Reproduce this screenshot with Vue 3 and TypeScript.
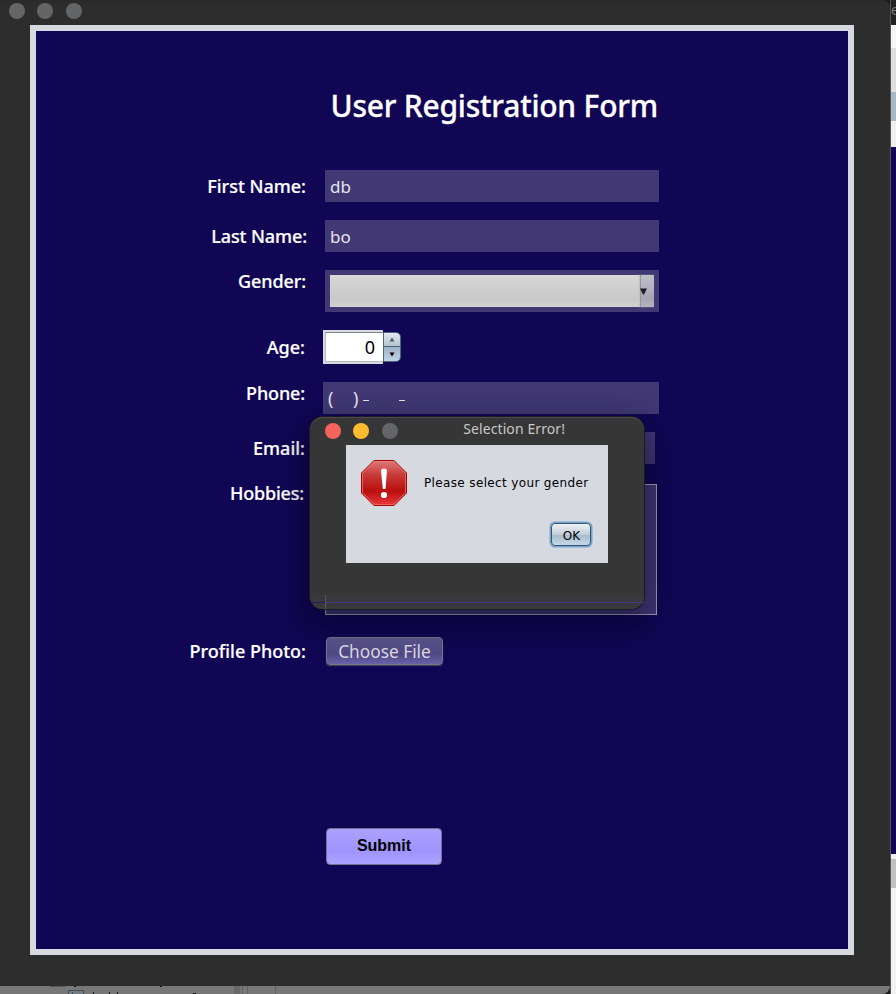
<script setup lang="ts">
import { ref } from 'vue'

const firstName = ref('db')
const lastName = ref('bo')
const age = ref(0)
</script>

<template>
  <div class="desktop">
    <main class="window">
      <header class="titlebar">
        <span class="dot"></span><span class="dot"></span><span class="dot"></span>
      </header>

      <section class="form">
        <h1>User Registration Form</h1>

        <div class="row first">
          <label>First Name:</label>
          <div class="field">{{ firstName }}</div>
        </div>
        <div class="row last">
          <label>Last Name:</label>
          <div class="field">{{ lastName }}</div>
        </div>
        <div class="row gender">
          <label>Gender:</label>
          <div class="combo">
            <div class="combo-face">
              <span class="combo-arrow">
                <svg width="7" height="7" viewBox="0 0 7 7"><path d="M0 .5H7L4 6.500H3Z" fill="#1d1d22" /></svg>
              </span>
            </div>
          </div>
        </div>
        <div class="row age">
          <label>Age:</label>
          <div class="spin-value"><span>{{ age }}</span></div>
          <div class="spin-buttons">
            <span><svg width="6" height="5" viewBox="0 0 6 5"><path d="M3 .5L5.5 4.5H.5Z" fill="#555c63" /></svg></span>
            <span><svg width="6" height="5" viewBox="0 0 6 5"><path d="M.5 .5H5.5L3 4.5Z" fill="#000" /></svg></span>
          </div>
        </div>
        <div class="row phone">
          <label>Phone:</label>
          <div class="field mask"><span>(</span><span>)</span><i></i><i></i></div>
        </div>
        <div class="row email">
          <label>Email:</label>
          <div class="field"></div>
        </div>
        <div class="row hobbies">
          <label>Hobbies:</label>
          <div class="area"></div>
        </div>
        <div class="row photo">
          <label>Profile Photo:</label>
          <button class="choose">Choose File</button>
        </div>
        <button class="submit">Submit</button>
      </section>
      <footer class="below">
        <svg width="300" height="8" viewBox="0 0 300 8">
          <path d="M50 .5H66" stroke="#595959" />
          <path d="M74 0h2v1h-2zM160 0h2v1h-2zM93 6h1v2h-1zM109 6h1v2h-1zM117 6h1v2h-1zM193 7h3v1h-3z" fill="#151515" />
          <path d="M68.5 8V4.500H83.500V8M72.500 6V8" fill="#747c84" stroke="#454d56" />
          <path d="M234 0h6v8h-6z" fill="#696969" />
          <path d="M242.500 0V8M247.500 0V8M275.500 0V8" stroke="#626262" />
        </svg>
      </footer>
    </main>

    <aside class="behind">
      <div class="b-title">e</div>
      <div class="b-white"></div>
      <div class="b-grey"></div>
      <div class="b-blue"></div>
      <div class="b-white2"></div>
      <div class="b-navy"></div>
      <div class="b-white3"></div>
      <div class="b-scroll"></div>
      <div class="b-rest"></div>
    </aside>

    <div class="dialog">
      <header class="dialog-bar">
        <span class="dot red"></span><span class="dot yellow"></span><span class="dot"></span>
        <h2>Selection Error!</h2>
      </header>
      <div class="dialog-body">
        <svg class="stop" width="48" height="48" viewBox="0 0 48 48">
          <defs>
            <linearGradient id="stopFill" x1="0" y1="0" x2="0" y2="1">
              <stop offset="0" stop-color="#dd7a7a" />
              <stop offset=".32" stop-color="#c93a3a" />
              <stop offset=".68" stop-color="#b90e0e" />
              <stop offset="1" stop-color="#ea3a3a" />
            </linearGradient>
          </defs>
          <path d="M14 1.500H34L46.500 14V34L34 46.500H14L1.500 34V14Z" fill="url(#stopFill)" stroke="#a90505" />
          <path d="M14.400 2.500H33.600L45.500 14.400V33.600L33.600 45.500H14.400L2.500 33.600V14.400Z" fill="none" stroke="#f08080" stroke-opacity=".65" />
          <path d="M21 11.500C21 8.800 27 8.800 27 11.500L25.500 30H22.800Z" fill="#fff" />
          <circle cx="24" cy="36" r="3.100" fill="#fff" />
        </svg>
        <p>Please select your gender</p>
        <button class="ok">OK</button>
      </div>
      <div class="ghost"><span></span></div>
    </div>
  </div>
</template>

<style>
body {
  background: #2d2d2d;
  overflow: hidden;
}
</style>

<style scoped>
.desktop {
  position: relative;
  display: flex;
  width: 896px;
  height: 994px;
  background: #1c1c1c;
  overflow: hidden;
  font-family: "Noto Sans", "Open Sans", sans-serif;
}
.desktop * {
  box-sizing: border-box;
}
button {
  padding: 0;
  margin: 0;
  white-space: nowrap;
}
.window {
  flex: none;
  width: 890px;
  height: 994px;
  background: #2d2d2d;
  border-radius: 0 8px 8px 0;
  overflow: hidden;
}
.titlebar {
  height: 25px;
  display: flex;
  gap: 12.500px;
  padding: 3px 0 0 8.700px;
  background: linear-gradient(#292929, #2d2d2d 5px);
}
.dot {
  flex: none;
  width: 16px;
  height: 16px;
  border-radius: 50%;
  background: #646567;
}
.form {
  width: 824px;
  height: 930px;
  margin-left: 30px;
  border: 6px solid #d6d9e0;
  background: #110654;
  color: #fff;
}
h1 {
  margin: 55px 0 0 294.500px;
  height: 40px;
  line-height: 40px;
  font-size: 30px;
  font-weight: 500;
  letter-spacing: -0.230px;
  -webkit-text-stroke: 0.300px #fff;
  white-space: nowrap;
}
.row {
  display: flex;
  align-items: flex-start;
}
label {
  flex: none;
  width: 289px;
  height: 24px;
  padding-right: 19px;
  text-align: right;
  font-size: 18px;
  line-height: 24px;
  font-weight: 500;
  -webkit-text-stroke: 0.200px #fff;
  white-space: nowrap;
}
.field {
  width: 334px;
  height: 32px;
  padding-left: 5px;
  font-size: 17px;
  line-height: 33px;
  background: #413874;
  color: #e6e4ee;
}
.first { margin-top: 44px; }
.first label, .last label { margin-top: 4px; }
.last label { padding-right: 18px; letter-spacing: -0.100px; }
.last, .gender, .age, .phone, .email { margin-top: 18px; }
.combo {
  width: 334px;
  height: 42px;
  padding: 5px;
  background: #413874;
}
.combo-face {
  height: 32px;
  display: flex;
  justify-content: flex-end;
  background: linear-gradient(#d8d8d8, #c8c8c8 75%, #d2d2d2);
}
.combo-arrow {
  width: 14px;
  padding: 13px 0 0 0;
  border-left: 1px solid #8f95a4;
  box-shadow: -1px 0 1px #bcc3c9;
  background: linear-gradient(#c0c0c8, #a7a5b3 75%, #b6b6bd);
  line-height: 0;
}
.combo-arrow svg { margin-left: -1px; }
.gender label { margin-top: -1px; letter-spacing: -0.100px; }
.age { height: 34px; }
.age label, .phone label, .email label {
  width: 287px;
  padding-right: 18px;
}
.age label { margin-top: 5px; }
.spin-value {
  width: 60px;
  height: 34px;
  padding: 2px 0 2px 2px;
  background: #d6d9e0;
  color: #000;
}
.spin-value span {
  display: block;
  height: 30px;
  padding-right: 8px;
  border: 1px solid #b8bbc1;
  border-top-color: #85888e;
  border-right: 0;
  background: #fff;
  text-align: right;
  font-size: 18px;
  line-height: 29px;
}
.spin-buttons {
  width: 18px;
  height: 30px;
  margin-top: 2px;
  display: flex;
  flex-direction: column;
  border: 1px solid #4b6780;
  border-radius: 0 5px 5px 0;
  overflow: hidden;
}
.spin-buttons span {
  flex: 0 0 13px;
  display: flex;
  align-items: center;
  justify-content: center;
  background: linear-gradient(#e4eaf0, #b3c3d0);
}
.spin-buttons span + span {
  flex: 1;
  border-top: 1px solid #4b6780;
  background: linear-gradient(#9fb3c6, #bdd3e6);
}
.phone label { margin-top: -1px; letter-spacing: -0.150px; }
.phone .field { width: 336px; }
.mask {
  display: flex;
  align-items: center;
}
.mask span {
  width: 25px;
  font-size: 18px;
  line-height: 30px;
}
.mask span + span { width: 10px; }
.mask i {
  width: 6px;
  height: 1px;
  margin: 5px 30px 0 0;
  background: #e6e4ee;
}
.email label { margin-top: 4px; }
.email .field { width: 332px; }
.hobbies { margin-top: 20px; }
.hobbies label {
  margin-top: -3px;
  padding-right: 21px;
  letter-spacing: -0.200px;
}
.area {
  width: 332px;
  height: 131px;
  border: 1px solid #a3a0b5;
  background: #413874;
}
.photo { margin-top: 22px; }
.photo label { margin-top: 2px; }
.choose {
  width: 117px;
  height: 28px;
  margin-left: 1px;
  border: 1px solid #78768a;
  border-radius: 4px;
  background: linear-gradient(#615a94, #514985 60%, #6862a8);
  color: #dddbe6;
  font: 17.300px/27px "Noto Sans", sans-serif;
  box-shadow: 0 1px 1px #4a4860;
}
.submit {
  display: block;
  width: 116px;
  height: 37px;
  margin: 163px 0 0 290px;
  padding-bottom: 2px;
  border: 1px solid #737091;
  border-radius: 4px;
  background: linear-gradient(#aba1ff, #9f94ff 65%, #aba4ff);
  color: #000;
  font: bold 16px/32px "Liberation Sans", sans-serif;
}
.below {
  height: 8px;
  margin-top: 31px;
  background: #777;
  line-height: 0;
}
.behind {
  flex: 1;
  display: flex;
  flex-direction: column;
  border-left: 1px solid #555;
}
.b-title { height: 25px; font-size: 14px; line-height: 19px; color: #777; background: #222; overflow: hidden; }
.b-white { height: 23px; background: #f4f4f4; }
.b-grey { height: 44px; background: #dedede; }
.b-blue { height: 29px; background: #a9b7c3; }
.b-white2 { height: 26px; background: #efefef; }
.b-navy { height: 707px; background: #110654; }
.b-white3 { height: 5px; background: #eee; }
.b-scroll { height: 29px; background: #c0c0c0; }
.b-rest { flex: 1; background: #f2f2f2; }

/* modal lies over the form */
.dialog {
  position: absolute;
  left: 310px;
  top: 417px;
  width: 334px;
  height: 192px;
  border-radius: 13px;
  background: #363636;
  box-shadow: 0 0 0 1px #1c1a26, inset 0 1px 0 #4c4c4c, 0 12px 32px 6px rgba(0, 0, 20, 0.450);
}
.dialog-bar {
  height: 28px;
  display: flex;
  gap: 12.500px;
  padding: 6px 0 0 14.700px;
}
.dialog-bar .red { background: #f6635c; }
.dialog-bar .yellow { background: #ffbb30; }
h2 {
  margin: -4px 0 0 53px;
  font: 14px/20px "Noto Sans", sans-serif;
  letter-spacing: 0.100px;
  color: #c8c8c8;
  white-space: nowrap;
}
.dialog-body {
  width: 262px;
  height: 118px;
  margin-left: 36px;
  padding: 14px;
  display: grid;
  grid-template-columns: 64px 1fr;
  grid-template-rows: 48px 1fr;
  background: #d6d9e0;
}
.dialog-body p {
  margin: 15px 0 0;
  font: 12px/18px "DejaVu Sans", sans-serif;
  letter-spacing: 0.360px;
  color: #000;
  white-space: nowrap;
}
.ok {
  grid-column: 2;
  justify-self: end;
  width: 40px;
  height: 23px;
  margin: 16px 3px 0 0;
  padding-left: 1px;
  border: 1px solid #39566f;
  border-radius: 4px;
  box-shadow: 0 0 0 1.500px #73a4d1;
  background: linear-gradient(#eef2f5, #c2ced8 50%, #a7bac9 52%, #c3d8ea);
  color: #000;
  font: 12px/22px "DejaVu Sans", sans-serif;
  padding-top: 1px;
}
.ghost {
  height: 14px;
  margin-top: 32px;
  padding-left: 15px;
  border-radius: 0 0 13px 13px;
  background: linear-gradient(transparent 7px, #241c66 7px, #241c66 8px, transparent 8px) #39383c;
}
.ghost span {
  display: block;
  height: 14px;
  border-left: 1px solid #55555a;
  background: linear-gradient(transparent 7px, #46398c 7px, #46398c 8px, transparent 8px);
}
</style>
